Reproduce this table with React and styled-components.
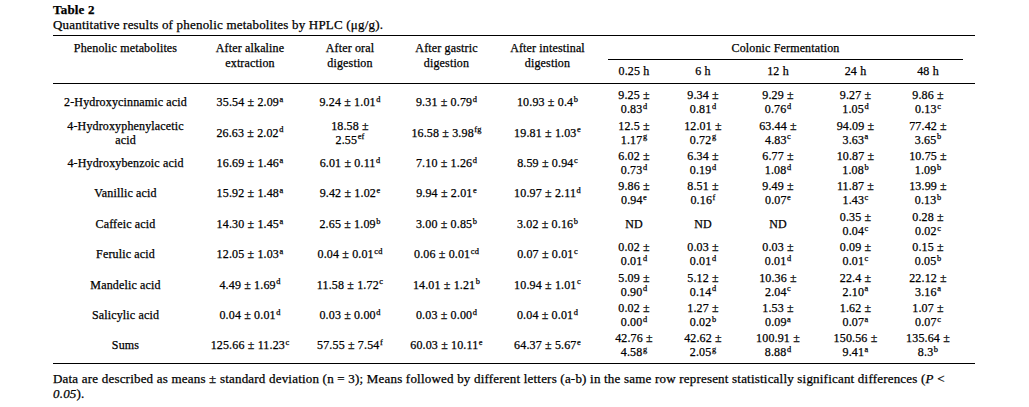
import styled, { createGlobalStyle } from "styled-components";

const GlobalStyle = createGlobalStyle`
  html, body {
    margin: 0;
    padding: 0;
    background: #fff;
  }
  body {
    font-family: "Liberation Serif", "Times New Roman", serif;
    color: #000;
    -webkit-text-stroke: 0.25px #000;
  }
`;

const rows = [
  ["2-Hydroxycinnamic acid", ["35.54 2.09 a", "9.24 1.01 d", "9.31 0.79 d", "10.93 0.4 b", "9.25 0.83 d", "9.34 0.81 d", "9.29 0.76 d", "9.27 1.05 d", "9.86 0.13 c"]],
  ["4-Hydroxyphenylacetic acid", ["26.63 2.02 d", "18.58 2.55 ef", "16.58 3.98 fg", "19.81 1.03 e", "12.5 1.17 g", "12.01 0.72 g", "63.44 4.83 c", "94.09 3.63 a", "77.42 3.65 b"]],
  ["4-Hydroxybenzoic acid", ["16.69 1.46 a", "6.01 0.11 d", "7.10 1.26 d", "8.59 0.94 c", "6.02 0.73 d", "6.34 0.19 d", "6.77 1.08 d", "10.87 1.08 b", "10.75 1.09 b"]],
  ["Vanillic acid", ["15.92 1.48 a", "9.42 1.02 e", "9.94 2.01 e", "10.97 2.11 d", "9.86 0.94 e", "8.51 0.16 f", "9.49 0.07 e", "11.87 1.43 c", "13.99 0.13 b"]],
  ["Caffeic acid", ["14.30 1.45 a", "2.65 1.09 b", "3.00 0.85 b", "3.02 0.16 b", "ND", "ND", "ND", "0.35 0.04 c", "0.28 0.02 c"]],
  ["Ferulic acid", ["12.05 1.03 a", "0.04 0.01 cd", "0.06 0.01 cd", "0.07 0.01 c", "0.02 0.01 d", "0.03 0.01 d", "0.03 0.01 d", "0.09 0.01 c", "0.15 0.05 b"]],
  ["Mandelic acid", ["4.49 1.69 d", "11.58 1.72 c", "14.01 1.21 b", "10.94 1.01 c", "5.09 0.90 d", "5.12 0.14 d", "10.36 2.04 c", "22.4 2.10 a", "22.12 3.16 a"]],
  ["Salicylic acid", ["0.04 0.01 d", "0.03 0.00 d", "0.03 0.00 d", "0.04 0.01 d", "0.02 0.00 d", "1.27 0.02 b", "1.53 0.09 a", "1.62 0.07 a", "1.07 0.07 c"]],
  ["Sums", ["125.66 11.23 c", "57.55 7.54 f", "60.03 10.11 e", "64.37 5.67 e", "42.76 4.58 g", "42.62 2.05 g", "100.91 8.88 d", "150.56 9.41 a", "135.64 8.3 b"]],
];

const widths = [145, 104, 96, 97, 105, 68, 70, 80, 75, 82];
const hours = ["0.25 h", "6 h", "12 h", "24 h", "48 h"];

function Value({ text, split }) {
  if (text === "ND") return "ND";
  const [mean, sd, letter] = text.split(" ");
  return (
    <>
      {mean} ±{split ? <br /> : " "}
      {sd}
      <Sup>{letter}</Sup>
    </>
  );
}

function nameLines(name) {
  if (name === "4-Hydroxyphenylacetic acid") {
    return (
      <>
        4-Hydroxyphenylacetic
        <br />
        acid
      </>
    );
  }
  return name;
}

export default function App() {
  return (
    <Page>
      <GlobalStyle />
      <Title>Table 2</Title>
      <Caption>Quantitative results of phenolic metabolites by HPLC (μg/g).</Caption>
      <Table>
        <colgroup>
          {widths.map((w, i) => (
            <col key={i} style={{ width: w }} />
          ))}
        </colgroup>
        <thead>
          <tr>
            <HeadCell rowSpan={2}>Phenolic metabolites</HeadCell>
            <HeadCell rowSpan={2}>
              After alkaline
              <br />
              extraction
            </HeadCell>
            <HeadCell rowSpan={2}>
              After oral
              <br />
              digestion
            </HeadCell>
            <HeadCell rowSpan={2}>
              After gastric
              <br />
              digestion
            </HeadCell>
            <HeadCell rowSpan={2}>
              After intestinal
              <br />
              digestion
            </HeadCell>
            <GroupCell colSpan={5}>
              <GroupLabel>Colonic Fermentation</GroupLabel>
            </GroupCell>
          </tr>
          <tr>
            {hours.map((h, i) => (
              <HourCell key={h} $last={i === hours.length - 1}>
                {h}
              </HourCell>
            ))}
          </tr>
        </thead>
        <tbody>
          {rows.map(([name, values]) => (
            <Row key={name}>
              <Cell>{nameLines(name)}</Cell>
              {values.map((v, i) => (
                <Cell key={i} $last={i === values.length - 1}>
                  <Value text={v} split={i >= 4 || v === "18.58 2.55 ef"} />
                </Cell>
              ))}
            </Row>
          ))}
        </tbody>
      </Table>
      <Footnote>
        Data are described as means ± standard deviation (n = 3); Means followed by different letters (a-b) in the same
        row represent statistically significant differences (<i>P</i> &lt;
        <br />
        <i>0.05</i>).
      </Footnote>
    </Page>
  );
}

const Page = styled.div`
  width: 922px;
  padding: 2px 0 0 53px;
`;

const Title = styled.div`
  font-weight: 700;
  font-size: 13px;
  line-height: 15px;
  letter-spacing: 0.2px;
`;

const Caption = styled.div`
  font-size: 13px;
  line-height: 15px;
  letter-spacing: 0.2px;
  margin-bottom: 3px;
`;

const Table = styled.table`
  width: 922px;
  table-layout: fixed;
  border-collapse: collapse;
  border-top: 1px solid #000;
  border-bottom: 1px solid #000;
  font-size: 12px;
  letter-spacing: 0.15px;

  thead {
    border-bottom: 1px solid #000;
  }

  tbody tr:first-child {
    height: 33.9px;
  }

  tbody tr:first-child td {
    padding-top: 3.5px;
  }

  tbody tr:last-child {
    height: 33.4px;
  }

  tbody tr:last-child td {
    padding-bottom: 3px;
  }
`;

const HeadCell = styled.th`
  font-weight: 400;
  text-align: center;
  vertical-align: top;
  padding: 4.5px 0 0;
  line-height: 15px;
  white-space: nowrap;
`;

const GroupCell = styled.th`
  font-weight: 400;
  padding: 0;
`;

const GroupLabel = styled.div`
  height: 23px;
  line-height: 24px;
  margin: 0 12px 0 8px;
  border-bottom: 1px solid #000;
  text-align: center;
`;

const HourCell = styled.th`
  font-weight: 400;
  height: 23px;
  padding: 0 ${(p) => (p.$last ? "12px" : "0")} 0 0;
  line-height: 15px;
  text-align: center;
  vertical-align: middle;
`;

const Row = styled.tr`
  height: 30.4px;
`;

const Cell = styled.td`
  padding: 0 ${(p) => (p.$last ? "12px" : "0")} 0 0;
  line-height: 14px;
  text-align: center;
  vertical-align: middle;
  white-space: nowrap;
`;

const Sup = styled.sup`
  font-size: 0.7em;
  line-height: 0;
  vertical-align: 0.5em;
  margin-left: 0.5px;
`;

const Footnote = styled.p`
  margin: 7px 0 0;
  font-size: 13px;
  line-height: 15px;
  letter-spacing: 0.2px;
`;
